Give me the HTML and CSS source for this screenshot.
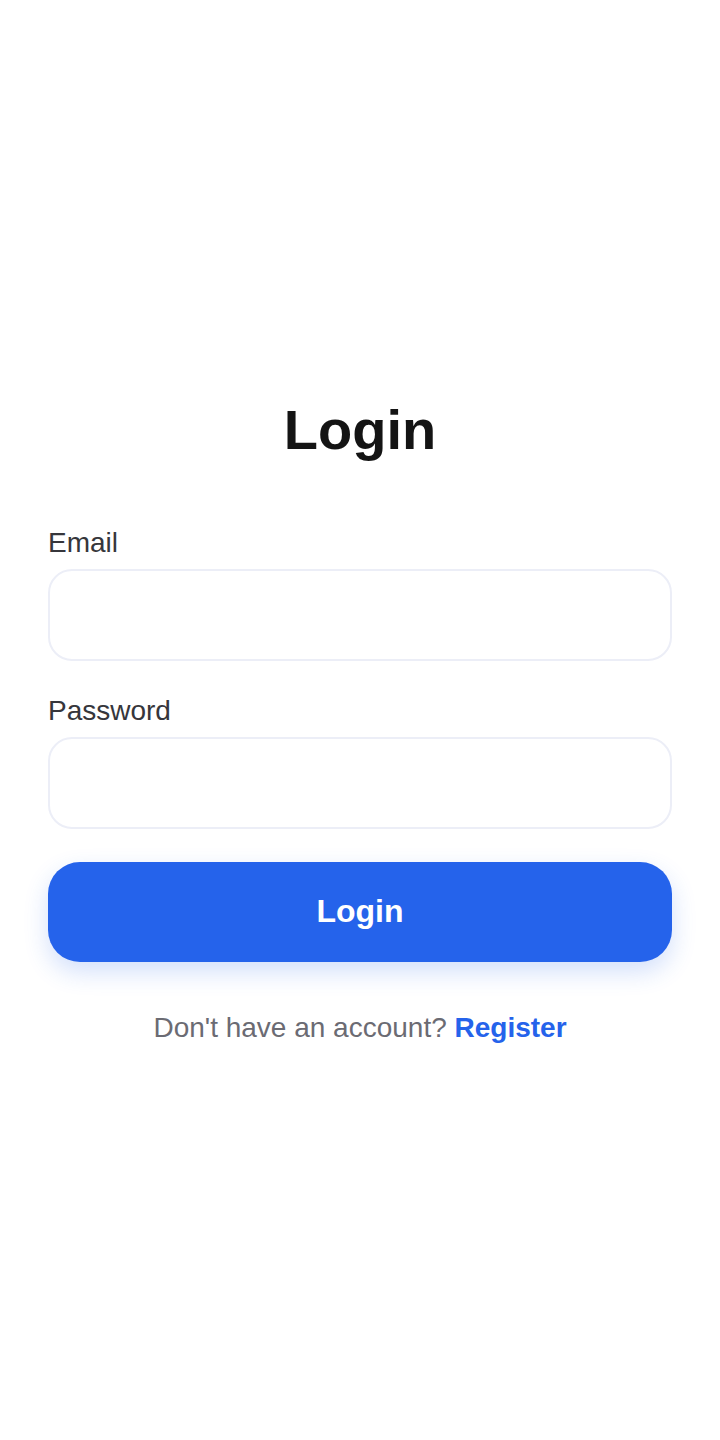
FILE: index.html
```html
<!DOCTYPE html>
<html lang="en">
<head>
<meta charset="utf-8">
<title>Login</title>
<link rel="stylesheet" href="styles.css">
</head>
<body>
<main class="page">
  <form class="login">
    <h1 class="title">Login</h1>
    <label class="field">
      <span class="label">Email</span>
      <input class="input" type="email">
    </label>
    <label class="field">
      <span class="label">Password</span>
      <input class="input" type="password">
    </label>
    <button class="btn" type="button">Login</button>
    <p class="alt">Don't have an account? <a class="link" href="#">Register</a></p>
  </form>
</main>
</body>
</html>
```
FILE: styles.css
```css
* { box-sizing: border-box; }
html, body { margin: 0; padding: 0; background: #ffffff; }
body { font-family: "Liberation Sans", Arial, sans-serif; }
.page {
  min-height: 1440px;
  display: flex;
  align-items: center;
  justify-content: center;
  padding: 3px 48px 0;
}
.login {
  width: 100%;
  display: flex;
  flex-direction: column;
}
.title {
  margin: 0 0 65px;
  text-align: center;
  font-size: 56px;
  line-height: 64px;
  font-weight: 700;
  color: #141414;
}
.field {
  display: flex;
  flex-direction: column;
  gap: 10px;
  margin-bottom: 34px;
}
.field:last-of-type { margin-bottom: 28px; }
.label {
  font-size: 28px;
  line-height: 32px;
  color: #36363b;
}
.input {
  height: 92px;
  border: 2px solid #eceef7;
  border-radius: 24px;
  background: #fff;
  font: inherit;
  font-size: 28px;
  padding: 0 24px;
  outline: none;
}
.btn {
  margin-top: 5px;
  height: 100px;
  border: none;
  border-radius: 32px;
  background: #2563eb;
  color: #fff;
  font: inherit;
  font-size: 32px;
  font-weight: 700;
  box-shadow: 0 10px 24px rgba(37, 99, 235, 0.2);
}
.alt {
  margin: 48px 0 0;
  text-align: center;
  font-size: 28px;
  line-height: 36px;
  color: #6b6b73;
}
.link {
  color: #2563eb;
  font-weight: 700;
  text-decoration: none;
}
```
